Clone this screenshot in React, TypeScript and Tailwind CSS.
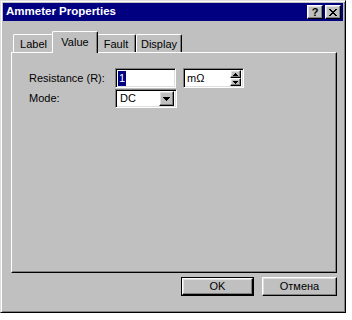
import React from 'react';

const raised =
    'border border-t-white border-l-white border-r-black border-b-black shadow-[inset_-1px_-1px_#808080,inset_1px_1px_#dfdfdf]';
const sunken =
    'border border-t-[#808080] border-l-[#808080] border-r-white border-b-white shadow-[inset_1px_1px_#000,inset_-1px_-1px_#dfdfdf]';

const DownArrow: React.FC<{ w?: number; h?: number }> = ({ w = 7, h = 4 }) => (
    <svg width={w} height={h} viewBox={`0 0 ${w} ${h}`} shapeRendering="crispEdges">
        <polygon points={`0,0 ${w},0 ${w / 2},${h}`} fill="#000" />
    </svg>
);

const UpArrow: React.FC<{ w?: number; h?: number }> = ({ w = 5, h = 3 }) => (
    <svg width={w} height={h} viewBox={`0 0 ${w} ${h}`} shapeRendering="crispEdges">
        <polygon points={`0,${h} ${w},${h} ${w / 2},0`} fill="#000" />
    </svg>
);

const CloseGlyph = () => (
    <svg width="8" height="7" viewBox="0 0 8 7" shapeRendering="crispEdges">
        <path d="M0 0h2v1h-2zM6 0h2v1h-2zM1 1h2v1h-2zM5 1h2v1h-2zM2 2h4v1h-4zM3 3h2v1h-2zM2 4h4v1h-4zM1 5h2v1h-2zM5 5h2v1h-2zM0 6h2v1h-2zM6 6h2v1h-2z" fill="#000" />
    </svg>
);

const Tab: React.FC<{ label: string; width: string; active?: boolean }> = ({ label, width, active }) => (
    <div
        className={
            active
                ? `relative z-10 ${width} h-[22px] -mb-px -mx-[2px] bg-[#c0c0c0] border-t border-l border-r border-t-white border-l-white border-r-black rounded-t-[2px] shadow-[inset_-1px_0_#808080] flex items-start justify-center pt-[2px]`
                : `${width} h-[18px] bg-[#c0c0c0] border-t border-l border-r border-t-white border-l-white border-r-black rounded-t-[2px] shadow-[inset_-1px_0_#808080] flex items-start justify-center pt-[1px]`
        }
    >
        <span>{label}</span>
    </div>
);

export default function App() {
    return (
        <div className="w-[352px] h-[320px] bg-white font-['Liberation_Sans',Arial,sans-serif] text-[11px] text-black">
            <div className="w-[346px] h-[313px] bg-[#c0c0c0] p-[2px] flex flex-col border border-t-[#dfdfdf] border-l-[#dfdfdf] border-r-black border-b-black shadow-[inset_1px_1px_#fff,inset_-1px_-1px_#808080]">
                {/* title bar */}
                <div className="h-[18px] bg-[#000080] flex items-center justify-between pl-[3px] pr-[2px]">
                    <span className="text-white font-bold text-[11.5px] leading-none">Ammeter Properties</span>
                    <div className="flex gap-[2px]">
                        <div className={`w-[16px] h-[14px] bg-[#c0c0c0] ${raised} flex items-center justify-center`}>
                            <span className="font-bold text-[11px] leading-none">?</span>
                        </div>
                        <div className={`w-[16px] h-[14px] bg-[#c0c0c0] ${raised} flex items-center justify-center`}>
                            <CloseGlyph />
                        </div>
                    </div>
                </div>

                {/* tabs + panel */}
                <div className="mt-[10px] pl-[8px] pr-[6px] flex flex-col">
                    <div className="flex items-end h-[21px] pl-[2px]">
                        <Tab label="Label" width="w-[41px]" />
                        <Tab label="Value" width="w-[46px]" active />
                        <Tab label="Fault" width="w-[40px]" />
                        <Tab label="Display" width="w-[46px]" />
                    </div>
                    <div className="h-[221px] border border-t-white border-l-white border-r-black border-b-black shadow-[inset_-1px_-1px_#808080] pt-[15px] pl-[17px] flex flex-col gap-[1px]">
                        <div className="flex items-center">
                            <span className="w-[86px]">Resistance (R):</span>
                            <div className={`w-[61px] h-[20px] bg-white ${sunken} flex items-center pl-[2px]`}>
                                <span className="bg-[#000080] text-white px-[1px] leading-[15px]">1</span>
                            </div>
                            <div className={`ml-[7px] w-[61px] h-[20px] bg-white ${sunken} flex items-center pl-[3px] pr-[2px]`}>
                                <span className="flex-1">mΩ</span>
                                <div className="flex flex-col w-[11px]">
                                    <div className={`h-[8px] bg-[#c0c0c0] ${raised} flex items-center justify-center`}>
                                        <UpArrow />
                                    </div>
                                    <div className={`h-[8px] bg-[#c0c0c0] ${raised} flex items-center justify-center`}>
                                        <DownArrow w={5} h={3} />
                                    </div>
                                </div>
                            </div>
                        </div>
                        <div className="flex items-center">
                            <span className="w-[86px]">Mode:</span>
                            <div className={`w-[62px] h-[19px] bg-white ${sunken} flex items-center pl-[4px] pr-[2px]`}>
                                <span className="flex-1">DC</span>
                                <div className={`w-[15px] h-[15px] bg-[#c0c0c0] ${raised} flex items-center justify-center`}>
                                    <DownArrow />
                                </div>
                            </div>
                        </div>
                    </div>
                </div>

                {/* buttons */}
                <div className="mt-[4px] pr-[6px] flex justify-end gap-[8px]">
                    <div className="w-[73px] h-[19px] border border-black">
                        <div className={`w-full h-full bg-[#c0c0c0] ${raised} flex items-center justify-center`}>OK</div>
                    </div>
                    <div className={`w-[75px] h-[19px] bg-[#c0c0c0] ${raised} flex items-center justify-center`}>Отмена</div>
                </div>
            </div>
        </div>
    );
}
